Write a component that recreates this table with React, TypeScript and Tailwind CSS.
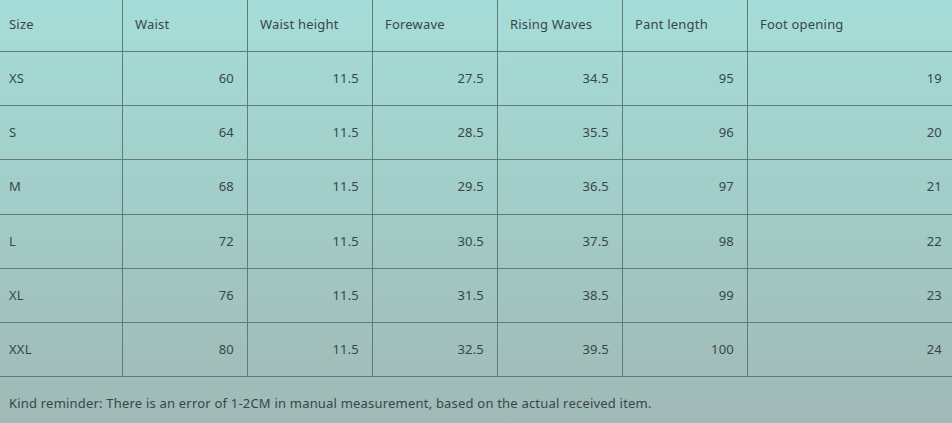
const headers = [
  "Size",
  "Waist",
  "Waist height",
  "Forewave",
  "Rising Waves",
  "Pant length",
  "Foot opening",
];

const rows: string[][] = [
  ["XS", "60", "11.5", "27.5", "34.5", "95", "19"],
  ["S", "64", "11.5", "28.5", "35.5", "96", "20"],
  ["M", "68", "11.5", "29.5", "36.5", "97", "21"],
  ["L", "72", "11.5", "30.5", "37.5", "98", "22"],
  ["XL", "76", "11.5", "31.5", "38.5", "99", "23"],
  ["XXL", "80", "11.5", "32.5", "39.5", "100", "24"],
];

const grid = "grid grid-cols-[123px_125px_125px_125px_125px_125px_1fr]";

export default function App() {
  return (
    <div
      className="w-[952px] h-[423px] overflow-hidden bg-gradient-to-b from-[#a6ddd8] via-[#a2ccc7] to-[#a0b9b6] text-[13px] text-[#36474a] tracking-[0.2px]"
      style={{ fontFamily: '"Noto Sans", "Open Sans", sans-serif' }}
    >
      <div className={`${grid} h-[52px] border-b border-[#5f7c7a]`}>
        {headers.map((h, i) => (
          <div
            key={h}
            className={`flex items-center pb-[2px] ${i === 0 ? "pl-[9px]" : "pl-[12px]"} ${
              i < 6 ? "border-r border-[#5f7c7a]" : ""
            }`}
          >
            {h}
          </div>
        ))}
      </div>
      {rows.map((r, ri) => (
        <div
          key={r[0]}
          className={`${grid} ${ri === 2 ? "h-[55px]" : "h-[54px]"} border-b border-[#5f7c7a]`}
        >
          {r.map((c, i) => (
            <div
              key={i}
              className={`flex items-center ${
                i === 0 ? "pl-[9px]" : i === 6 ? "justify-end pr-[10px]" : "justify-end pr-[13px]"
              } ${i < 6 ? "border-r border-[#5f7c7a]" : ""}`}
            >
              {c}
            </div>
          ))}
        </div>
      ))}
      <div className="h-[46px] flex items-center pl-[9px] pt-[8px]">
        Kind reminder: There is an error of 1-2CM in manual measurement, based on the actual received item.
      </div>
    </div>
  );
}
